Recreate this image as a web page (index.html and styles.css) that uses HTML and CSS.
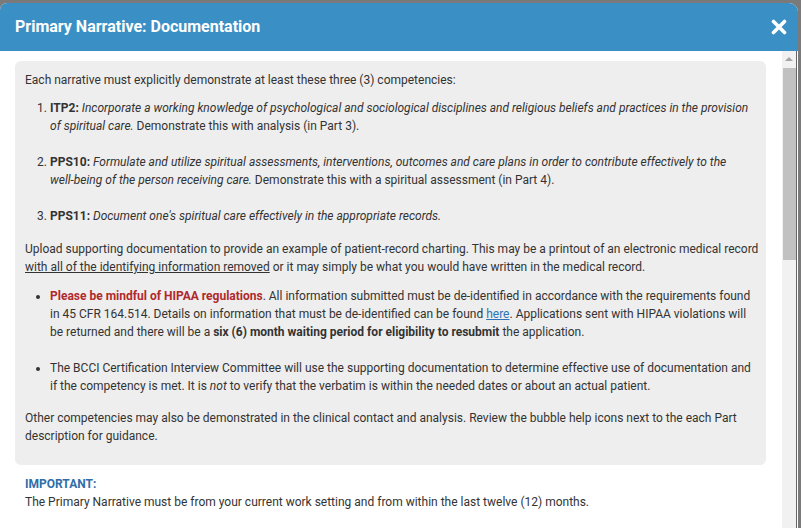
FILE: index.html
```html
<!DOCTYPE html>
<html lang="en">
<head>
  <meta charset="UTF-8">
  <meta name="viewport" content="width=device-width, initial-scale=1">
  <title>Primary Narrative: Documentation</title>
  <link rel="stylesheet" href="styles.css">
</head>
<body>
  <div class="dialog">
    <div class="dialog-header">
      <h1>Primary Narrative: Documentation</h1>
      <button class="close" aria-label="Close">
        <svg width="16" height="16" viewBox="0 0 16 16">
          <path d="M2.5 2.5 L13.5 13.5 M13.5 2.5 L2.5 13.5" stroke="#fff" stroke-width="3.6" stroke-linecap="round"/>
        </svg>
      </button>
    </div>

    <div class="dialog-body">
      <div class="content">
        <div class="panel">
          <p>Each narrative must explicitly demonstrate at least these three (3) competencies:</p>

          <ol class="competencies">
            <li><b>ITP2:</b> <i>Incorporate a working knowledge of psychological and sociological disciplines and religious beliefs and practices in the provision of spiritual care.</i> Demonstrate this with analysis (in Part 3).</li>
            <li><b>PPS10:</b> <i>Formulate and utilize spiritual assessments, interventions, outcomes and care plans in order to contribute effectively to the <span class="nowrap">well-being</span> of the person receiving care.</i> Demonstrate this with a spiritual assessment (in Part 4).</li>
            <li><b>PPS11:</b> <i>Document one's spiritual care effectively in the appropriate records.</i></li>
          </ol>

          <p class="upload">Upload supporting documentation to provide an example of patient-record charting. This may be a printout of an electronic medical record <u>with all of the identifying information removed</u> or it may simply be what you would have written in the medical record.</p>

          <ul class="notes">
            <li><b class="warn">Please be mindful of HIPAA regulations</b>. All information submitted must be de-identified in accordance with the requirements found in 45 CFR 164.514. Details on information that must be de-identified can be found <a href="#">here</a>. Applications sent with HIPAA violations will be returned and there will be a <b>six (6) month waiting period for eligibility to resubmit</b> the application.</li>
            <li>The BCCI Certification Interview Committee will use the supporting documentation to determine effective use of documentation and <span class="nowrap">if the</span> competency is met. It is <i>not</i> to verify that the verbatim is within the needed dates or about an actual patient.</li>
          </ul>

          <p class="other">Other competencies may also be demonstrated in the clinical contact and analysis. Review the bubble help icons next to the each Part description for guidance.</p>
        </div>

        <div class="important">
          <h4>IMPORTANT:</h4>
          <p>The Primary Narrative must be from your current work setting and from within the last twelve (12) months.</p>
        </div>
      </div>

      <div class="scrollbar">
        <span class="arrow"></span>
        <span class="thumb"></span>
      </div>
    </div>
  </div>
</body>
</html>
```

FILE: styles.css
```css
html, body {
  height: 100%;
}

body {
  margin: 0;
  padding: 3px 3px 0 0;
  box-sizing: border-box;
  background-color: #7a7a7a;
  font-family: Roboto, "Liberation Sans", sans-serif;
  font-size: 12px;
  line-height: 18px;
  color: #333;
  overflow: hidden;
}

.dialog {
  height: 100%;
  display: flex;
  flex-direction: column;
  background: white;
  border-radius: 7px 9px 0 0;
  overflow: hidden;
}

.dialog-header {
  display: flex;
  align-items: center;
  justify-content: space-between;
  height: 48px;
  padding: 0 11px 0 15px;
  background-color: #3a8fc5;
  flex-shrink: 0;
}

.dialog-header h1 {
  margin: 0;
  font-size: 16px;
  font-weight: 700;
  color: white;
}

.close {
  display: flex;
  padding: 0;
  border: none;
  background: none;
  cursor: pointer;
}

.dialog-body {
  flex: 1;
  display: flex;
  min-height: 0;
}

.content {
  flex: 1;
  padding: 10px 16px 0 15px;
}

.panel {
  background-color: #eeeeee;
  border-radius: 6px;
  padding: 10px 5px 20px 10px;
}

.panel p {
  margin: 0;
}

.nowrap {
  white-space: nowrap;
}

.competencies {
  margin: 10px 0 15px 0;
  padding-left: 25px;
}

.competencies li {
  margin-bottom: 18px;
}

.competencies li:last-child {
  margin-bottom: 0;
}

.notes {
  margin: 11px 0 14px 0;
  padding-left: 25px;
}

.notes li {
  margin-bottom: 18px;
}

.notes li:last-child {
  margin-bottom: 0;
}

.warn {
  color: #b0292b;
}

.notes a {
  color: #2f72b7;
}

.important {
  padding: 10px 10px 0 10px;
}

.important h4 {
  margin: 0;
  font-size: 12px;
  color: #2f6ea8;
}

.important p {
  margin: 0;
}

/* barra de desplazamiento */
.scrollbar {
  width: 14px;
  flex-shrink: 0;
  margin-right: 1px;
  background-color: #f1f1f1;
  display: flex;
  flex-direction: column;
  align-items: center;
  border-right: 1px solid #666;
}

.arrow {
  margin-top: 6px;
  width: 0;
  height: 0;
  border-left: 4px solid transparent;
  border-right: 4px solid transparent;
  border-bottom: 4px solid #a3a3a3;
}

.thumb {
  margin-top: 7px;
  width: 13px;
  height: 192px;
  background-color: #c1c1c1;
}
```
